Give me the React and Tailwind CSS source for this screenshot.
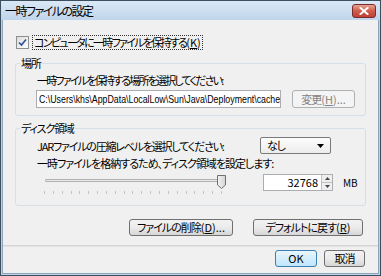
import React from "react";

const jp = "font-['Noto_Sans_CJK_JP',sans-serif] [font-feature-settings:'palt']";

function Key({ k, tail = "" }) {
  return (
    <span className="tracking-normal">
      (<span className="underline">{k}</span>){tail}
    </span>
  );
}

function Btn({ children, className = "", focused = false, disabled = false }) {
  return (
    <div
      className={`flex items-center justify-center rounded-[3px] border text-[11px] leading-none tracking-[-1px] ${
        focused
          ? "border-[#3c7fb1] bg-gradient-to-b from-[#eaf6fd] to-[#bee6fd]"
          : disabled
          ? "border-[#adb2b5] bg-[#f4f4f4] text-[#838383]"
          : "border-[#707070] bg-gradient-to-b from-[#f2f2f2] via-[#ebebeb] to-[#d6d6d6]"
      } ${className}`}
    >
      {children}
    </div>
  );
}

function Group({ label, className = "", children }) {
  return (
    <div className={`relative rounded-[3px] border border-[#d5dfe5] ${className}`}>
      <span className="absolute -top-[8px] left-[4px] bg-[#f0f0f0] px-[1px] text-[11px] leading-[14px] tracking-[-1.2px]">
        {label}
      </span>
      {children}
    </div>
  );
}

function Slider() {
  const ticks = Array.from({ length: 21 });
  return (
    <div className="relative h-[22px] w-[186px]">
      <div className="absolute left-[4px] right-[4px] top-[5px] h-[3px] rounded-[1px] border border-[#b0b0b0] bg-[#e7eaea]" />
      <svg className="absolute right-0 top-0" width="11" height="16" viewBox="0 0 11 16">
        <defs>
          <linearGradient id="th" x1="0" x2="1">
            <stop offset="0" stopColor="#f3f3f3" />
            <stop offset="1" stopColor="#d4d4d4" />
          </linearGradient>
        </defs>
        <path d="M1.5 1.5 H9.5 V11 L5.5 14.5 L1.5 11 Z" fill="url(#th)" stroke="#707070" />
      </svg>
      <div className="absolute left-[3px] right-[5px] top-[17px] flex justify-between">
        {ticks.map((_, i) => (
          <div key={i} className="h-[3px] w-px bg-[#c4c4c4]" />
        ))}
      </div>
    </div>
  );
}

export default function App() {
  return (
    <div className={`flex h-[276px] w-[381px] flex-col border border-[#3b4f5f] bg-[#bcd2e8] text-black ${jp}`}>
      <div className="flex h-[19px] items-center justify-between bg-gradient-to-b from-[#dbe8f5] to-[#bfd5ec] pl-[4px] pr-[4px]">
        <span className="text-[12px] leading-none tracking-[-1.5px]">一時ファイルの設定</span>
        <div className="flex h-[14px] w-[24px] items-center justify-center rounded-[3px] border border-[#7a2a2a] bg-gradient-to-b from-[#e8a393] via-[#cf5c4c] to-[#c23f32]">
          <svg width="10" height="8" viewBox="0 0 10 8">
            <path d="M1.5 1 L8.5 7 M8.5 1 L1.5 7" stroke="#fff" strokeWidth="2" strokeLinecap="square" />
          </svg>
        </div>
      </div>
      <div className="mx-[1px] mb-[1px] flex flex-1 flex-col border-l border-r border-b border-[#8fa5ba] bg-[#f0f0f0] text-[11px] tracking-[-1.2px]">
        <div className="mt-[15px] flex items-center pl-[13px]">
          <div className="flex h-[13px] w-[13px] items-center justify-center border border-[#8e8f8f] bg-gradient-to-br from-[#dcdcdc] to-white">
            <svg width="9" height="9" viewBox="0 0 9 9">
              <path d="M1 4.5 L3.5 7 L8 1.5" fill="none" stroke="#2a4f9a" strokeWidth="1.6" />
            </svg>
          </div>
          <span className="ml-[3px] border border-dotted border-[#333] px-[1px] leading-[13px] tracking-[-1.7px]">
            コンピュータに一時ファイルを保持する<Key k="K" />
          </span>
        </div>

        <Group label="場所" className="mx-[12px] mt-[13px] h-[53px]">
          <div className="pl-[21px] pt-[9px] leading-[14px] tracking-[-1.8px]">
            一時ファイルを保持する場所を選択してください:
          </div>
          <div className="mt-[3px] flex items-center pl-[20px]">
            <div className="flex h-[18px] w-[245px] items-center overflow-hidden whitespace-nowrap border border-[#abadb3] bg-white pl-[2px] font-['Liberation_Sans',sans-serif] text-[11px] leading-none tracking-normal">
              <span className="inline-block origin-left scale-x-[0.8]">
                C:\Users\khs\AppData\LocalLow\Sun\Java\Deployment\cache
              </span>
            </div>
            <Btn disabled className="ml-[11px] h-[18px] w-[63px]">
              変更<Key k="H" tail="..." />
            </Btn>
          </div>
        </Group>

        <Group label="ディスク領域" className="mx-[12px] mt-[12px] h-[78px]">
          <div className="flex items-center pt-[8px]">
            <span className="pl-[21px] leading-[14px]">
              JARファイルの圧縮レベルを選択してください:
            </span>
            <div className="ml-auto mr-[34px] flex h-[17px] w-[71px] items-center justify-between rounded-[2px] border border-[#7a7a7a] bg-gradient-to-b from-[#fdfdfd] to-[#ececec] pl-[6px] pr-[6px]">
              <span>なし</span>
              <svg width="7" height="4" viewBox="0 0 7 4">
                <path d="M0 0 H7 L3.5 4 Z" fill="#000" />
              </svg>
            </div>
          </div>
          <div className="pl-[21px] pt-[2px] leading-[14px] tracking-[-1px]">
            一時ファイルを格納するため、ディスク領域を設定します:
          </div>
          <div className="mt-[4px] flex items-start pl-[25px]">
            <Slider />
            <div className="ml-[36px] flex h-[17px] w-[70px] items-stretch border border-[#abadb3] bg-white">
              <div className="flex flex-1 items-center justify-end pr-[3px] leading-none tracking-normal">32768</div>
              <div className="flex w-[11px] flex-col border-l border-[#c0c0c0] bg-[#eeeeee]">
                <div className="flex flex-1 items-center justify-center border-b border-[#c0c0c0]">
                  <svg width="5" height="3" viewBox="0 0 5 3"><path d="M0 3 H5 L2.5 0 Z" fill="#444" /></svg>
                </div>
                <div className="flex flex-1 items-center justify-center">
                  <svg width="5" height="3" viewBox="0 0 5 3"><path d="M0 0 H5 L2.5 3 Z" fill="#444" /></svg>
                </div>
              </div>
            </div>
            <span className="ml-[10px] mt-[2px] text-[10px] leading-[14px] tracking-normal">MB</span>
          </div>
        </Group>

        <div className="mt-[13px] flex justify-end gap-[20px] pr-[15px]">
          <Btn className="h-[17px] w-[104px]">
            ファイルの削除<Key k="D" tail="..." />
          </Btn>
          <Btn className="h-[17px] w-[110px]">
            デフォルトに戻す<Key k="R" />
          </Btn>
        </div>

        <div className="mt-[9px] h-[2px] border-t border-[#d5d5d5] border-b-white bg-[#e3e3e3]" />

        <div className="mt-[3px] flex justify-end gap-[7px] pr-[13px]">
          <Btn focused className="h-[17px] w-[42px] tracking-normal">OK</Btn>
          <Btn className="h-[17px] w-[41px]">取消</Btn>
        </div>
      </div>
    </div>
  );
}
